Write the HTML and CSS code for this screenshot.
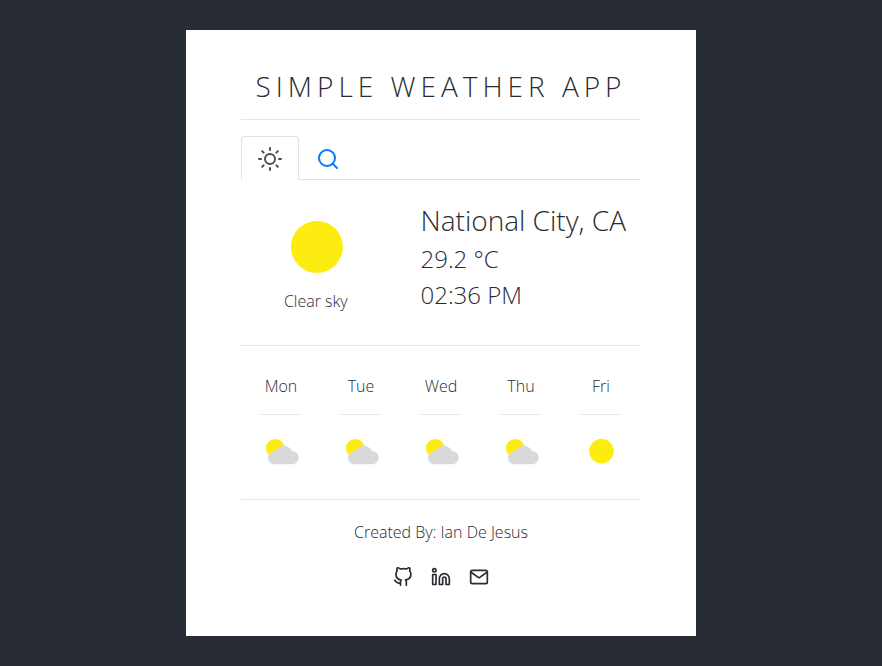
FILE: index.html
```html
<!DOCTYPE html>
<html lang="en">
<head>
<meta charset="utf-8">
<title>Simple Weather App</title>
<link rel="stylesheet" href="styles.css">
</head>
<body>
<svg class="defs" width="0" height="0">
  <symbol id="partly" viewBox="0 0 40 40">
    <circle cx="14.300" cy="17.200" r="9.300" fill="#fdec10"/>
    <g fill="#d9d9d9">
      <circle cx="13.100" cy="27" r="6.200"/>
      <circle cx="22.900" cy="23.900" r="9.200"/>
      <circle cx="31.200" cy="26.700" r="6.600"/>
      <path d="M13 24h18v9.200H13z"/>
    </g>
  </symbol>
</svg>
<main class="card">
  <h1>SIMPLE WEATHER APP</h1>
  <nav class="tabs">
    <a class="tab active"><svg class="icon" viewBox="0 0 24 24"><circle cx="12" cy="12" r="5"/><path d="M12 1v2M12 21v2M4.220 4.220l1.420 1.420M18.360 18.360l1.420 1.420M1 12h2M21 12h2M4.220 19.780l1.420-1.420M18.360 5.640l1.420-1.420"/></svg></a>
    <a class="tab"><svg class="icon" viewBox="0 0 24 24"><circle cx="11" cy="11" r="8"/><path d="M21 21l-4.350-4.350"/></svg></a>
  </nav>
  <section class="current">
    <div class="sky">
      <svg class="sun" viewBox="0 0 54 54"><circle cx="27.900" cy="26.900" r="26" fill="#fdec10"/></svg>
      <p>Clear sky</p>
    </div>
    <div class="facts">
      <h2>National City, CA</h2>
      <p>29.2 °C</p>
      <p>02:36 PM</p>
    </div>
  </section>
  <section class="forecast">
    <div class="day"><span>Mon</span><svg viewBox="0 0 40 40"><use href="#partly"/></svg></div>
    <div class="day"><span>Tue</span><svg viewBox="0 0 40 40"><use href="#partly"/></svg></div>
    <div class="day"><span>Wed</span><svg viewBox="0 0 40 40"><use href="#partly"/></svg></div>
    <div class="day"><span>Thu</span><svg viewBox="0 0 40 40"><use href="#partly"/></svg></div>
    <div class="day"><span>Fri</span><svg viewBox="0 0 40 40"><circle cx="20.500" cy="20.100" r="12.300" fill="#fdec10"/></svg></div>
  </section>
  <footer>
    <p>Created By: Ian De Jesus</p>
    <div class="links">
      <svg class="icon" viewBox="0 0 24 24"><path d="M9 19c-5 1.500-5-2.500-7-3m14 6v-3.870a3.370 3.370 0 0 0-.94-2.610c3.140-.35 6.440-1.540 6.440-7A5.440 5.440 0 0 0 20 4.770 5.070 5.070 0 0 0 19.910 1S18.730.65 16 2.480a13.380 13.380 0 0 0-7 0C6.270.65 5.090 1 5.090 1A5.070 5.070 0 0 0 5 4.770a5.440 5.440 0 0 0-1.500 3.780c0 5.420 3.300 6.610 6.440 7A3.370 3.370 0 0 0 9 18.130V22"/></svg>
      <svg class="icon" viewBox="0 0 24 24"><path d="M16 8a6 6 0 0 1 6 6v7h-4v-7a2 2 0 0 0-4 0v7h-4v-7a6 6 0 0 1 6-6z"/><path d="M2 9h4v12H2z"/><circle cx="4" cy="4" r="2"/></svg>
      <svg class="icon" viewBox="0 0 24 24"><path d="M4 4h16c1.100 0 2 .9 2 2v12c0 1.100-.9 2-2 2H4c-1.100 0-2-.9-2-2V6c0-1.100.9-2 2-2z"/><path d="M22 6l-10 7L2 6"/></svg>
    </div>
  </footer>
</main>
</body>
</html>
```
FILE: styles.css
```css
* { box-sizing: border-box; }
body {
  margin: 0;
  min-height: 100vh;
  padding: 30px 0;
  background: #282c34;
  color: #282c34;
  font: 300 16px/24px "Open Sans", sans-serif;
}
h1, h2, p { margin: 0; font-weight: 300; }
.defs { display: none; }
.card {
  width: 510px;
  height: 606px;
  margin: 0 auto;
  padding: 39px 55px;
  background: #fff;
}
h1 {
  height: 51px;
  border-bottom: 1px solid #e5e5e5;
  font-size: 28px;
  line-height: 34px;
  letter-spacing: 5px;
  text-align: center;
  white-space: nowrap;
}
.tabs {
  display: flex;
  height: 44px;
  margin-top: 16px;
  border-bottom: 1px solid #dee2e6;
}
.icon {
  display: block;
  width: 24px;
  height: 24px;
  fill: none;
  stroke: currentColor;
  stroke-width: 2;
  stroke-linecap: round;
  stroke-linejoin: round;
}
.tab {
  height: 44px;
  padding: 10px 16px;
  border: 1px solid transparent;
  border-bottom: 0;
  border-radius: 4px 4px 0 0;
  color: #007bff;
}
.tab.active { border-color: #dee2e6; background: #fff; color: #495057; }
.current {
  display: flex;
  height: 166px;
  border-bottom: 1px solid #e5e5e5;
}
.sky { width: 149.500px; padding-top: 40px; text-align: center; }
.sun { display: block; width: 54px; height: 54px; margin: 0 auto 15px; }
.facts { padding: 23px 0 0 30px; font-size: 24px; line-height: 36px; white-space: nowrap; }
.facts h2 { font-size: 28px; line-height: 34px; margin-bottom: 4px; }
.forecast {
  display: flex;
  height: 154px;
  padding-top: 28px;
  border-bottom: 1px solid #e5e5e5;
}
.day { display: flex; flex-direction: column; align-items: center; width: 80px; }
.day span {
  width: 40px;
  height: 41px;
  border-bottom: 1px solid #e5e5e5;
  text-align: center;
}
.day svg { width: 40px; height: 40px; margin-top: 16px; }
footer { padding-top: 20px; text-align: center; }
.links { display: flex; justify-content: center; gap: 18px; margin-top: 23px; }
.links .icon { width: 20px; height: 20px; }
```
